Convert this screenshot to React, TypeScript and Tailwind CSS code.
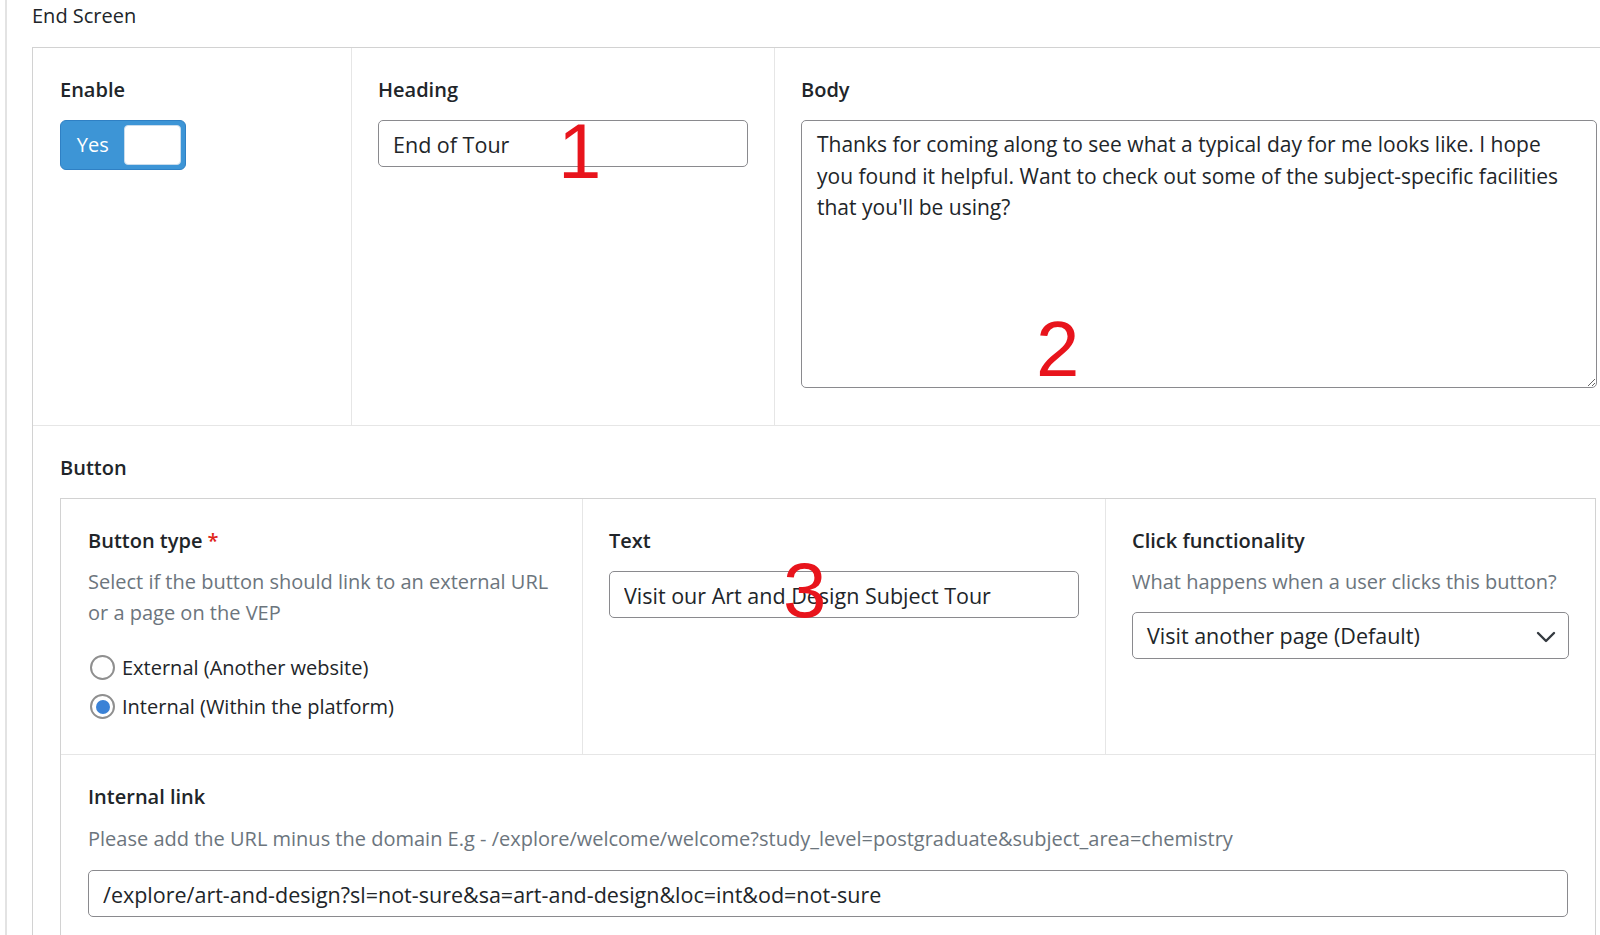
import React from "react";

const font = "font-['Open_Sans','Noto_Sans',sans-serif]";

function Label({ children }: { children: React.ReactNode }) {
  return <div className="text-[20px] leading-[30px] font-semibold text-[#212529]">{children}</div>;
}

function Hint({ children, className = "" }: { children: React.ReactNode; className?: string }) {
  return <p className={`text-[20px] leading-[31px] text-[#6c757d] ${className}`}>{children}</p>;
}

function TextInput({ value, className = "" }: { value: string; className?: string }) {
  return (
    <input
      readOnly
      value={value}
      className={`h-[47px] w-full rounded-[5px] border border-[#8a8a8e] bg-white px-[14px] pt-[2px] text-[21.5px] text-[#212529] outline-none ${className}`}
    />
  );
}

function Radio({ label, checked }: { label: string; checked?: boolean }) {
  return (
    <label className="flex h-[39px] items-center gap-[7px] pl-[2px]">
      <span className="flex h-[25px] w-[25px] items-center justify-center rounded-full border-2 border-[#8f8f8f] bg-white">
        {checked && <span className="h-[14px] w-[14px] rounded-full bg-[#3b82d6]" />}
      </span>
      <span className="text-[20px] text-[#212529]">{label}</span>
    </label>
  );
}

function Mark({ n, className }: { n: string; className: string }) {
  return (
    <span className={`absolute font-['Liberation_Sans',Arial,sans-serif] text-[78px] leading-none text-[#e8141c] ${className}`}>
      {n}
    </span>
  );
}

export default function App() {
  return (
    <div className={`relative flex h-[935px] w-[1600px] overflow-hidden bg-white ${font}`}>
      <div className="w-[5px] shrink-0" />
      <div className="w-[2px] shrink-0 bg-[#e3e3e3]" />
      <div className="shrink-0 pl-[25px] pt-px">
        <h2 className="mb-[16px] text-[20px] leading-[30px] font-medium text-[#212529]">End Screen</h2>

        <div className="w-[1591px] border-l border-t border-[#d2d2d2]">
          {/* top row */}
          <div className="flex border-b border-[#e6e6e6]">
            <div className="w-[319px] border-r border-[#e6e6e6] px-[27px] pt-[27px]">
              <div className="mb-[15px]"><Label>Enable</Label></div>
              <div className="flex h-[50px] w-[126px] items-center rounded-[6px] border border-[#2f80c4] bg-[#3d95d6] pr-[4px]">
                <span className="w-[64px] text-center text-[20px] text-white">Yes</span>
                <span className="h-[40px] w-[57px] rounded-[4px] border border-[#c9dcec] bg-white" />
              </div>
            </div>
            <div className="w-[423px] border-r border-[#e6e6e6] px-[26px] pt-[27px]">
              <div className="mb-[15px]"><Label>Heading</Label></div>
              <TextInput value="End of Tour" />
            </div>
            <div className="flex-1 px-[26px] pt-[27px] pb-[37px]">
              <div className="mb-[15px]"><Label>Body</Label></div>
              <textarea
                readOnly
                className="block h-[268px] w-full rounded-[5px] border border-[#8a8a8e] px-[15px] py-[8px] text-[21px] leading-[31.5px] text-[#212529] outline-none"
                value="Thanks for coming along to see what a typical day for me looks like. I hope you found it helpful. Want to check out some of the subject-specific facilities that you'll be using?"
              />
            </div>
          </div>

          {/* button section */}
          <div className="px-[27px] pt-[27px]">
            <div className="mb-[15px]"><Label>Button</Label></div>
            <div className="w-[1536px] border border-b-0 border-[#d2d2d2]">
              <div className="flex border-b border-[#e6e6e6]">
                <div className="w-[522px] border-r border-[#e6e6e6] px-[27px] pt-[27px] pb-[28px]">
                  <div className="mb-[10px]">
                    <Label>
                      Button type <span className="text-[#e0261b]">*</span>
                    </Label>
                  </div>
                  <Hint className="mb-[20px]">
                    Select if the button should link to an external URL
                    <br />
                    or a page on the VEP
                  </Hint>
                  <Radio label="External (Another website)" />
                  <Radio label="Internal (Within the platform)" checked />
                </div>
                <div className="w-[523px] border-r border-[#e6e6e6] px-[26px] pt-[27px]">
                  <div className="mb-[15px]"><Label>Text</Label></div>
                  <TextInput value="Visit our Art and Design Subject Tour" />
                </div>
                <div className="flex-1 px-[26px] pt-[27px]">
                  <div className="mb-[10px]"><Label>Click functionality</Label></div>
                  <Hint className="mb-[15px]">What happens when a user clicks this button?</Hint>
                  <div className="flex h-[47px] items-center justify-between rounded-[5px] border border-[#8a8a8e] pl-[14px] pr-[12px] pt-[2px]">
                    <span className="text-[21.5px] text-[#212529]">Visit another page (Default)</span>
                    <svg width="20" height="12" viewBox="0 0 20 12" fill="none">
                      <path d="M2 2l8 8 8-8" stroke="#343a40" strokeWidth="2.4" strokeLinecap="round" strokeLinejoin="round" />
                    </svg>
                  </div>
                </div>
              </div>
              <div className="px-[27px] pt-[27px] pb-[20px]">
                <div className="mb-[11px]"><Label>Internal link</Label></div>
                <Hint className="mb-[16px]">
                  Please add the URL minus the domain E.g - /explore/welcome/welcome?study_level=postgraduate&amp;subject_area=chemistry
                </Hint>
                <TextInput value="/explore/art-and-design?sl=not-sure&sa=art-and-design&loc=int&od=not-sure" />
              </div>
            </div>
          </div>
        </div>
      </div>

      <Mark n="1" className="left-[558px] top-[112px]" />
      <Mark n="2" className="left-[1036px] top-[310px]" />
      <Mark n="3" className="left-[783px] top-[551px]" />
    </div>
  );
}
